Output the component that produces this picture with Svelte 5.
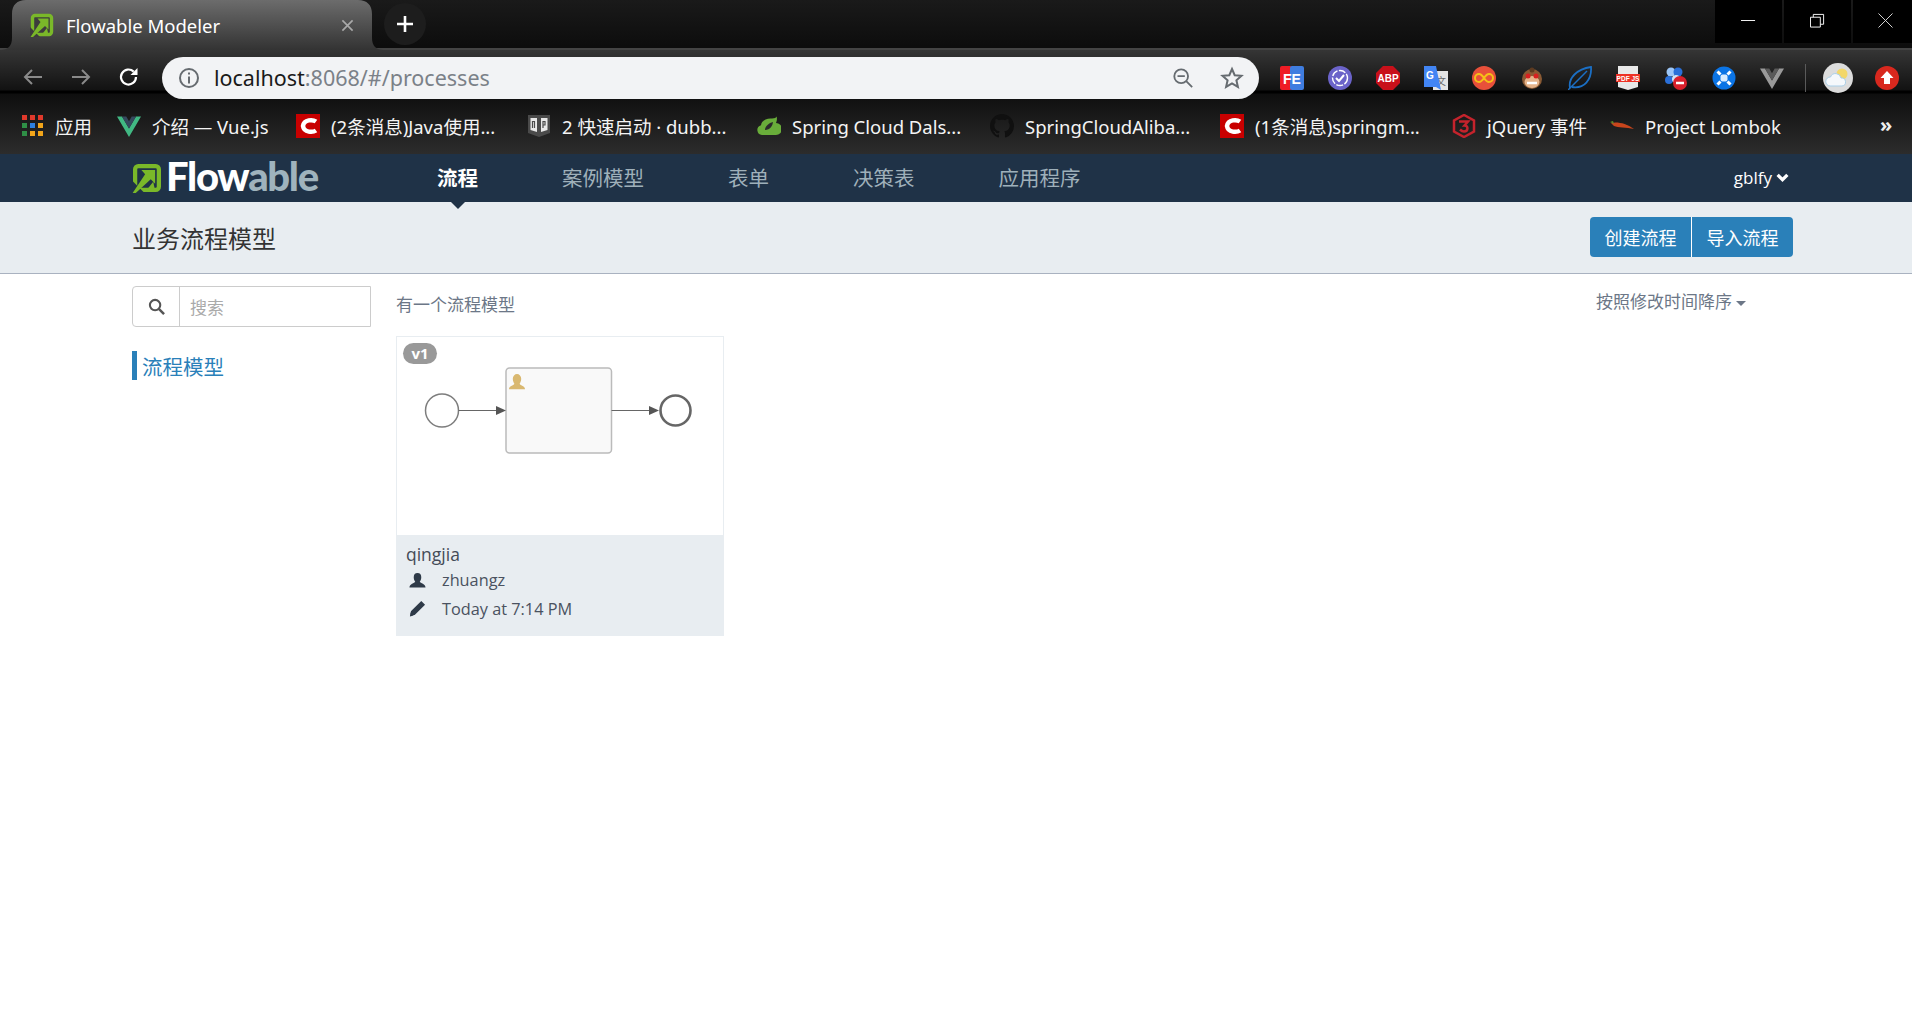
<script>
  const bookmarks = [
    { id: 'apps', label: '应用', w: 95 },
    { id: 'vue', label: '介绍 — Vue.js', w: 179 },
    { id: 'csdn', label: '(2条消息)Java使用...', w: 231 },
    { id: 'book', label: '2 快速启动 · dubb...', w: 230 },
    { id: 'spring', label: 'Spring Cloud Dals...', w: 233 },
    { id: 'github', label: 'SpringCloudAliba...', w: 230 },
    { id: 'csdn', label: '(1条消息)springm...', w: 232 },
    { id: 'jq', label: 'jQuery 事件', w: 158 },
    { id: 'lombok', label: 'Project Lombok', w: 200 }
  ];
  const navItems = [
    { label: '流程', active: true },
    { label: '案例模型' },
    { label: '表单' },
    { label: '决策表' },
    { label: '应用程序' }
  ];
  const exts = ['fe', 'check', 'abp', 'gt', 'inf', 'monkey', 'leaf', 'pdf', 'paw', 'bluex', 'vuegrey'];
</script>

{#snippet flowMark(bg)}
  <svg class="mark" viewBox="0 0 24 24">
    <rect x="2.500" y="2.500" width="19" height="19" rx="2.500" fill={bg} stroke="#7ab829" stroke-width="3.400"/>
    <path d="M0 14l10 10H0z" fill={bg}/>
    <path d="M7.500 5.500H18.500V16.500L15 13 3 24H0.500L10.500 9z" fill="#7ab829"/>
    <path d="M18 20l-5 0 4-5z" fill="#7ab829"/>
  </svg>
{/snippet}

{#snippet vueIcon(outer, inner)}
  <svg class="i24" viewBox="0 0 24 24">
    <path d="M0 2.500h5L12 14.500 19 2.500h5L12 23z" fill={outer}/>
    <path d="M5 2.500h4.300L12 7.200l2.700-4.700H19L12 14.500z" fill={inner}/>
  </svg>
{/snippet}

<div class="page">
  <div class="tabstrip">
    <div class="tab">
      <svg class="tabshape" viewBox="0 0 384 50" preserveAspectRatio="none">
        <defs>
          <linearGradient id="tg" x1="0" y1="0" x2="0" y2="1">
            <stop offset="0" stop-color="#6c6c6c"/><stop offset="1" stop-color="#333"/>
          </linearGradient>
        </defs>
        <path d="M0 50c8 0 12-4 12-12V14C12 5 17 0 26 0h332c9 0 14 5 14 14v24c0 8 4 12 12 12z" fill="url(#tg)"/>
      </svg>
      <span class="fav">{@render flowMark('#3d3d3d')}</span>
      <span class="tabtitle">Flowable Modeler</span>
      <svg class="tabclose" viewBox="0 0 14 14"><path d="M1.500 1.500l11 11M12.500 1.500l-11 11" stroke="#a9a9a9" stroke-width="1.800"/></svg>
    </div>
    <div class="newtab">
      <svg viewBox="0 0 20 20"><path d="M10 2v16M2 10h16" stroke="#fff" stroke-width="2.600"/></svg>
    </div>
    <div class="winctl">
      <div class="wbtn w1"><svg viewBox="0 0 16 16"><path d="M0 8h15" stroke="#fff" stroke-width="1"/></svg></div>
      <div class="wbtn w1"><svg viewBox="0 0 16 16"><path d="M.5 4.500h10.500v10.500H.5zM3.500 4.500V1.500H14.500V12H11" fill="none" stroke="#fff"/></svg></div>
      <div class="wbtn w2"><svg viewBox="0 0 16 16"><path d="M.5.500l15 15M15.500.500l-15 15" stroke="#ddd" stroke-width="1"/></svg></div>
    </div>
  </div>

  <div class="chrome">
    <div class="toolbar">
      <div class="navbtns">
        <svg class="i24" viewBox="0 0 24 24"><path d="M21 12H4M11 5l-7 7 7 7" fill="none" stroke="#8a8a8a" stroke-width="2"/></svg>
        <svg class="i24" viewBox="0 0 24 24"><path d="M3 12h17M13 5l7 7-7 7" fill="none" stroke="#8a8a8a" stroke-width="2"/></svg>
        <svg class="i24" viewBox="0 0 24 24"><path d="M19 12a7.500 7.500 0 1 1-2.300-5.400" fill="none" stroke="#fff" stroke-width="2.200"/><path d="M20.500 3v7h-7z" fill="#fff"/></svg>
      </div>
      <div class="omni">
        <svg class="info" viewBox="0 0 22 22"><circle cx="11" cy="11" r="9" fill="none" stroke="#666b70" stroke-width="2"/><path d="M10 5.500h2v2h-2zM10 9.500h2v7h-2z" fill="#666b70"/></svg>
        <span class="url">localhost<span class="urlrest">:8068/#/processes</span></span>
        <svg class="omnizoom" viewBox="0 0 24 24"><circle cx="10" cy="10" r="7.500" fill="none" stroke="#666b70" stroke-width="2"/><path d="M6 10h8M15.500 15.500L22 22" stroke="#666b70" stroke-width="2"/></svg>
        <svg class="star" viewBox="0 0 24 24"><path d="M12 3l2.700 6.200 6.800.600-5.100 4.500 1.500 6.600L12 17.400l-5.900 3.500 1.500-6.600-5.100-4.500 6.800-.600z" fill="none" stroke="#666b70" stroke-width="2"/></svg>
      </div>
      <div class="exts">
        {#each exts as e}
          <div class="ext">
            {#if e === 'fe'}
              <svg class="i24" viewBox="0 0 24 24"><rect width="12" height="24" fill="#ef1c25" rx="2"/><rect x="10" width="14" height="24" fill="#3f7de0" rx="2"/><text x="12" y="17.500" text-anchor="middle" class="svgt" font-size="14" fill="#fff">FE</text></svg>
            {:else if e === 'check'}
              <svg class="i24" viewBox="0 0 24 24"><circle cx="12" cy="12" r="12" fill="#6b63c9"/><circle cx="12" cy="12" r="7.500" fill="none" stroke="#fff" stroke-width="1.400" stroke-dasharray="7 1.500"/><path d="M8 12l3 3 5-6" fill="none" stroke="#fff" stroke-width="2"/></svg>
            {:else if e === 'abp'}
              <svg class="i24" viewBox="0 0 24 24"><path d="M7 0h10l7 7v10l-7 7H7l-7-7V7z" fill="#c8101a"/><text x="12" y="16" text-anchor="middle" class="svgt" font-size="10" fill="#fff">ABP</text></svg>
            {:else if e === 'gt'}
              <svg class="i24" viewBox="0 0 24 24"><rect x="9" y="5" width="15" height="19" fill="#e4e4e4"/><text x="17" y="19" text-anchor="middle" font-size="10" fill="#666" class="cjk">文</text><path d="M0 0h12l5 24-5-3H0z" fill="#4285f4"/><text x="6" y="13" text-anchor="middle" class="svgt" font-size="10" fill="#fff">G</text></svg>
            {:else if e === 'inf'}
              <svg class="i24" viewBox="0 0 24 24"><circle cx="12" cy="12" r="12" fill="#e8503a"/><path d="M12 12c-2-3-3.500-4-5-4a4 4 0 0 0 0 8c1.500 0 3-1 5-4s3.500-4 5-4a4 4 0 0 1 0 8c-1.500 0-3-1-5-4z" fill="none" stroke="#f5c018" stroke-width="2"/></svg>
            {:else if e === 'monkey'}
              <svg class="i24" viewBox="0 0 24 24"><circle cx="12" cy="13" r="10" fill="#8a5a34"/><circle cx="12" cy="4" r="2.500" fill="#5c3a20"/><ellipse cx="12" cy="16" rx="7.500" ry="6" fill="#e6b48a"/><circle cx="8" cy="10" r="2.500" fill="#d82020"/><circle cx="16" cy="10" r="2.500" fill="#d82020"/><path d="M7 17h10" stroke="#fff" stroke-width="2.500"/></svg>
            {:else if e === 'leaf'}
              <svg class="i24" viewBox="0 0 24 24"><path d="M2 22C0 12 9 3 23 1c1 13-7 22-19 20" fill="none" stroke="#1b6fc4" stroke-width="1.800"/><path d="M0 24L19 5" stroke="#1b6fc4" stroke-width="1.500"/></svg>
            {:else if e === 'pdf'}
              <svg class="i24" viewBox="0 0 24 24"><path d="M2 0h20v21l-10 3-10-3z" fill="#e8e8e8"/><rect y="8" width="24" height="8" fill="#ee3124"/><text x="12" y="14.500" text-anchor="middle" class="svgt" font-size="6.500" fill="#fff">PDF JS</text></svg>
            {:else if e === 'paw'}
              <svg class="i24" viewBox="0 0 24 24"><circle cx="7" cy="6" r="4.500" fill="#9cc6f7"/><circle cx="14" cy="6" r="4.500" fill="#2a6fd8"/><circle cx="5" cy="14" r="4" fill="#2a6fd8"/><circle cx="12" cy="13" r="4" fill="#cfe3fa"/><circle cx="16" cy="17" r="7" fill="#d9202c"/><path d="M12 17h8" stroke="#fff" stroke-width="2.500"/></svg>
            {:else if e === 'bluex'}
              <svg class="i24" viewBox="0 0 24 24"><circle cx="12" cy="12" r="11.500" fill="#0b74e5"/><rect x="8.500" y="8.500" width="7" height="7" rx="2" fill="#d9ecff"/><path d="M5.500 5.500l3 3M18.500 5.500l-3 3M5.500 18.500l3-3M18.500 18.500l-3-3" stroke="#fff" stroke-width="3"/></svg>
            {:else}
              {@render vueIcon('#9a9a9a', '#5a5a5a')}
            {/if}
          </div>
        {/each}
      </div>
      <div class="sep"></div>
      <svg class="weather" viewBox="0 0 30 30"><circle cx="15" cy="15" r="15" fill="#dcdcdc"/><circle cx="19" cy="11" r="5.500" fill="#f3d768"/><path d="M7 23a4.500 4.500 0 0 1 .5-9 5.500 5.500 0 0 1 10.500 1 4 4 0 0 1 1 8z" fill="#f5f8fb" stroke="#a9cfe8"/></svg>
      <svg class="redup" viewBox="0 0 24 24"><circle cx="12" cy="12" r="12" fill="#d8281e"/><path d="M12 5l6.500 7H15v6H9v-6H5.500z" fill="#fff"/></svg>
    </div>

    <div class="bookmarks">
      {#each bookmarks as b}
        <div class="bm" style="width:{b.w}px">
          <span class="bmicon">
            {#if b.id === 'apps'}
              <svg class="i22" viewBox="0 0 22 22">
                <path d="M0 0h5v5H0z" fill="#e0392b"/><path d="M8 0h5v5H8z" fill="#e0392b"/><path d="M16 0h5v5h-5z" fill="#e0392b"/>
                <path d="M0 8h5v5H0z" fill="#2f8f46"/><path d="M8 8h5v5H8z" fill="#2c7fe0"/><path d="M16 8h5v5h-5z" fill="#f2a51a"/>
                <path d="M0 16h5v5H0z" fill="#2f8f46"/><path d="M8 16h5v5H8z" fill="#f2a51a"/><path d="M16 16h5v5h-5z" fill="#f2a51a"/>
              </svg>
            {:else if b.id === 'vue'}
              {@render vueIcon('#41b883', '#35495e')}
            {:else if b.id === 'csdn'}
              <svg class="i24" viewBox="0 0 24 24"><rect width="24" height="24" fill="#c80000"/><path d="M20 7.500C17 5.500 8 5 7 12c1 7 10 6.500 13 4.500" fill="none" stroke="#fff" stroke-width="4.500"/></svg>
            {:else if b.id === 'book'}
              <svg class="i24" viewBox="0 0 24 24"><path d="M1 1h22v18l-11 4-11-4z" fill="#4a4a4a"/><path d="M3.500 4h6.500v14l-6.500-2zM20.500 4H14v14l6.500-2z" fill="#e8e8e8"/><path d="M5.500 14V7.500h2V14M16 14V7.500h2V11h-2" fill="none" stroke="#4a4a4a" stroke-width="1.200"/></svg>
            {:else if b.id === 'spring'}
              <svg class="i24" viewBox="0 0 24 24"><path d="M5 20a5 5 0 0 1-1-9.800C5 5 10 3 15 3.500c3 0 4-1 4.500-2 1 3 0 5-.500 6.500a6 6 0 0 1 0 12z" fill="#69ad3a" transform="translate(0 1)"/><path d="M8 16c0-4 4-7 8-8-.500 4-3 8-8 8z" fill="#2b2b2b"/></svg>
            {:else if b.id === 'github'}
              <svg class="i24" viewBox="0 0 16 16"><path fill="#101010" d="M8 0C3.580 0 0 3.580 0 8c0 3.540 2.290 6.530 5.470 7.590.400.070.550-.170.550-.380 0-.190-.010-.820-.010-1.490-2.010.370-2.530-.490-2.690-.940-.090-.230-.480-.940-.820-1.130-.280-.150-.680-.520-.010-.530.630-.010 1.080.580 1.230.820.720 1.210 1.870.870 2.330.660.070-.520.280-.870.510-1.070-1.780-.200-3.640-.890-3.640-3.950 0-.870.310-1.590.820-2.150-.080-.200-.360-1.020.080-2.120 0 0 .670-.210 2.200.820.640-.180 1.320-.270 2-.270.680 0 1.360.090 2 .270 1.530-1.040 2.200-.820 2.200-.820.440 1.100.160 1.920.080 2.120.510.560.820 1.270.820 2.150 0 3.070-1.870 3.750-3.650 3.950.290.250.540.730.540 1.480 0 1.070-.010 1.930-.010 2.200 0 .210.150.460.550.380A8.013 8.013 0 0 0 16 8c0-4.420-3.580-8-8-8z"/></svg>
            {:else if b.id === 'jq'}
              <svg class="i24" viewBox="0 0 24 24"><path d="M12 1l10 5.500v11L12 23 2 17.500v-11z" fill="none" stroke="#c4232c" stroke-width="2.500"/><path d="M7 7.500h9l-3.500 4c4 0 4 6-.500 6-2 0-3-1-4-2" fill="none" stroke="#c4232c" stroke-width="2.500"/></svg>
            {:else}
              <svg class="i24" viewBox="0 0 24 24"><path d="M1 9c6-1.500 15 0 23 6-8-2-16-1-20-3z" fill="#c8451c"/><path d="M0 8l3-1 1 3z" fill="#5e8b2a"/></svg>
            {/if}
          </span>
          <span class="bmtext">{b.label}</span>
        </div>
      {/each}
      <span class="more">»</span>
    </div>
  </div>

  <header class="appnav">
    <div class="logo">
      {@render flowMark('#1f3247')}
      <span class="logotext">Flow<span class="able">able</span></span>
    </div>
    <nav class="menu">
      {#each navItems as n}
        <span class="menuitem" class:active={n.active}>{n.label}</span>
      {/each}
    </nav>
    <div class="user">gblfy
      <svg class="chev" viewBox="0 0 12 8"><path d="M1.500 1.500L6 6l4.500-4.500" fill="none" stroke="#fff" stroke-width="3"/></svg>
    </div>
  </header>

  <div class="subheader">
    <h1>业务流程模型</h1>
    <div class="btngroup">
      <button class="b1">创建流程</button>
      <button class="b2">导入流程</button>
    </div>
  </div>

  <main class="content">
    <aside class="side">
      <div class="search">
        <span class="searchicon">
          <svg viewBox="0 0 18 18"><circle cx="7.500" cy="7.500" r="5.500" fill="none" stroke="#555" stroke-width="2.200"/><path d="M11.500 11.500L17 17" stroke="#555" stroke-width="2.600"/></svg>
        </span>
        <span class="placeholder">搜索</span>
      </div>
      <div class="sideitem">流程模型</div>
    </aside>
    <section class="list">
      <div class="listhead">
        <span class="count">有一个流程模型</span>
        <span class="sort">按照修改时间降序<i class="caret"></i></span>
      </div>
      <article class="card">
        <div class="thumb">
          <span class="badge">v1</span>
          <svg class="diagram" viewBox="0 0 328 199" width="328" height="199">
            <circle cx="46" cy="74.500" r="16.500" fill="#fff" stroke="#7d7d7d" stroke-width="1.500"/>
            <path d="M62.500 74.500H105" stroke="#666" stroke-width="1.200"/>
            <rect x="110" y="32" width="105.500" height="85" rx="3.500" fill="#f9f9f9" stroke="#bbb" stroke-width="1.500"/>
            <path d="M100 70l10 4.500-10 4.500z" fill="#555"/>
            <path d="M215.500 74.500H258" stroke="#666" stroke-width="1.200"/>
            <path d="M253 70l10 4.500-10 4.500z" fill="#555"/>
            <circle cx="279.500" cy="74.500" r="15" fill="#fff" stroke="#666" stroke-width="2.600"/>
            <path d="M121 38a4.200 4.800 0 0 1 4.200 4.800c0 2.500-1 4-1.600 5 1 2 5.400 2 5.400 5.500H113c0-3.500 4.400-3.500 5.400-5.500-.6-1-1.600-2.500-1.600-5A4.200 4.800 0 0 1 121 38z" fill="#d9b870"/>
          </svg>
        </div>
        <div class="foot">
          <div class="name">qingjia</div>
          <div class="meta">
            <svg class="metaicon" viewBox="0 0 18 18"><path d="M9 1a4 4.500 0 0 1 4 4.500c0 2.200-.9 3.700-1.600 4.700.8 1.900 6.100 2 6.100 6.300H.5c0-4.300 5.300-4.400 6.100-6.300C5.900 9.200 5 7.700 5 5.500A4 4.500 0 0 1 9 1z" fill="#2e3a48"/></svg>
            <span>zhuangz</span>
          </div>
          <div class="meta">
            <svg class="metaicon" viewBox="0 0 18 18"><path d="M13 1l4 4L6 16H2v-4zM1.500 13l3.500 3.500-4 1z" fill="#2e3a48"/></svg>
            <span>Today at 7:14 PM</span>
          </div>
        </div>
      </article>
    </section>
  </main>
</div>

<style>
  :global(body) { margin: 0; background: #fff; }
  .page { width: 1912px; height: 1013px; overflow: hidden; font-family: "Open Sans", "Noto Sans CJK SC", sans-serif; }
  svg { display: block; flex: none; }
  .i24 { width: 24px; height: 24px; }
  .i22 { width: 22px; height: 22px; }

  .tabstrip { height: 50px; display: flex; align-items: flex-start; background: linear-gradient(#1a1a1a, #0c0c0c); box-shadow: inset 0 -2px #444; }
  .tab { position: relative; width: 384px; height: 50px; display: flex; align-items: center; padding-left: 30px; box-sizing: border-box; }
  .tabshape { position: absolute; inset: 0; width: 100%; height: 100%; }
  .fav { position: relative; width: 24px; height: 24px; }
  .mark { width: 100%; height: 100%; }
  .tabtitle { position: relative; margin-left: 12px; color: #fff; font: 18.500px "Noto Sans", "Noto Sans CJK SC", sans-serif; }
  .tabclose { position: absolute; left: 341px; top: 19px; width: 13px; height: 13px; }
  .newtab { width: 42px; height: 42px; margin-top: 3px; border-radius: 50%; background: #1d1d1d; display: flex; align-items: center; justify-content: center; }
  .newtab svg { width: 20px; height: 20px; }
  .winctl { margin-left: auto; display: flex; gap: 2px; height: 43px; }
  .wbtn { height: 43px; background: #000; display: flex; align-items: center; justify-content: center; }
  .w1 { width: 67px; }
  .w2 { width: 59px; padding-left: 6px; box-sizing: border-box; }
  .wbtn svg { width: 15px; height: 15px; margin-top: -2px; }

  .chrome { height: 104px; background: linear-gradient(#353535 0, #121212 40px, #000 41px, #000 43px, #0e0e0e 44px, #2c2c2c 104px); }
  .toolbar { height: 54px; display: flex; align-items: flex-start; }
  .navbtns { width: 162px; display: flex; gap: 24px; padding: 15px 0 0 21px; box-sizing: border-box; }
  .omni { margin-top: 7px; width: 1097px; height: 42px; border-radius: 21px; background: #f2f3f5; display: flex; align-items: center; padding: 0 15px 0 16px; box-sizing: border-box; }
  .info { width: 22px; height: 22px; }
  .url { margin-left: 14px; font: 21.500px/32px "Noto Sans", "Noto Sans CJK SC", sans-serif; color: #1a1a1a; }
  .urlrest { color: #7b8188; }
  .omnizoom { width: 22px; height: 22px; margin-left: auto; }
  .star { width: 24px; height: 24px; margin-left: 26px; }
  .exts { display: flex; margin: 16px 0 0 9px; }
  .ext { width: 48px; height: 24px; display: flex; justify-content: center; }
  .svgt { font-family: "Liberation Sans", sans-serif; font-weight: 700; }
  .cjk { font-family: "Noto Sans CJK SC", sans-serif; }
  .sep { width: 1px; height: 28px; margin: 14px 0 0 9px; background: #5a5a5a; }
  .weather { width: 30px; height: 30px; margin: 13px 0 0 17px; }
  .redup { width: 24px; height: 24px; margin: 16px 0 0 22px; }

  .bookmarks { height: 44px; display: flex; align-items: center; padding-left: 22px; position: relative; }
  .bm { display: flex; align-items: center; gap: 11px; color: #f4f4f4; font: 18.500px "Noto Sans", "Noto Sans CJK SC", sans-serif; white-space: nowrap; flex: none; }
  .bmicon { display: flex; }
  .more { margin-left: 70px; color: #eee; font: bold 20px "Noto Sans", sans-serif; margin-top: -4px; }

  .appnav { height: 48px; background: #1f3247; display: flex; align-items: center; padding-left: 132px; box-sizing: border-box; }
  .logo { width: 305px; display: flex; align-items: center; gap: 4px; }
  .logo .mark { width: 30px; height: 30px; }
  .logotext { color: #fff; font: 900 40px/44px Lato, sans-serif; letter-spacing: -1.300px; margin-top: -4px; }
  .able { color: #9fb3bd; }
  .menu { display: flex; gap: 84px; }
  .menuitem { color: #9fb0ba; font-size: 20.500px; position: relative; line-height: 48px; }
  .active { color: #fff; font-weight: 700; }
  .active::after { content: ""; position: absolute; left: 50%; top: 48px; margin-left: -7px; border: 7px solid transparent; border-top-color: #1f3247; border-bottom: 0; z-index: 1; }
  .user { margin-left: auto; margin-right: 123px; display: flex; align-items: center; gap: 4px; color: #fff; font-size: 17px; margin-top: -2px; }
  .chev { width: 13px; height: 9px; }

  .subheader { height: 72px; background: #e8edf1; border-bottom: 1px solid #a9b2c0; box-sizing: border-box; display: flex; align-items: center; justify-content: space-between; padding: 0 119px 0 132px; }
  h1 { margin: 0; font-size: 24px; font-weight: 400; color: #333; }
  .btngroup { display: flex; margin-top: -1px; }
  button { height: 40px; border: 0; background: #2a80b9; color: #fff; font: 18px "Open Sans", "Noto Sans CJK SC", sans-serif; padding: 0; }
  .b1 { width: 102px; border-radius: 4px 0 0 4px; border-right: 1px solid #fff; }
  .b2 { width: 101px; border-radius: 0 4px 4px 0; }

  .content { display: flex; padding: 12px 0 0 132px; }
  .side { width: 264px; flex: none; }
  .search { width: 239px; height: 41px; border: 1px solid #ccc; box-sizing: border-box; border-radius: 4px 0 0 4px; display: flex; align-items: center; }
  .searchicon { width: 46px; height: 100%; border-right: 1px solid #ccc; display: flex; align-items: center; justify-content: center; }
  .searchicon svg { width: 17px; height: 17px; }
  .placeholder { margin-left: 10px; color: #aaa; font-size: 17px; }
  .sideitem { margin-top: 24px; height: 29px; border-left: 5px solid #2a80b9; padding-left: 5px; color: #2a80b9; font-size: 20.500px; line-height: 33px; }
  .list { flex: 1; }
  .listhead { height: 50px; display: flex; justify-content: space-between; align-items: flex-start; padding-right: 166px; color: #6c7787; font-size: 17px; line-height: 38px; }
  .sort { display: flex; align-items: center; margin-top: -3px; }
  .caret { width: 0; height: 0; margin: 2px 0 0 4px; border: 5px solid transparent; border-top-color: #6c7787; border-bottom: 0; }
  .card { width: 328px; height: 300px; box-sizing: border-box; display: flex; flex-direction: column; }
  .thumb { position: relative; height: 199px; border: 1px solid #e8edf1; border-bottom: 0; box-sizing: border-box; }
  .diagram { margin: -1px; }
  .badge { position: absolute; left: 6px; top: 6px; width: 34px; height: 21px; border-radius: 11px; background: #999; color: #fff; font: 700 15px/21px "Open Sans", sans-serif; text-align: center; }
  .foot { flex: 1; background: #e8edf1; padding: 7px 10px; color: #4a5260; }
  .name { font-size: 17.500px; line-height: 24px; color: #444b57; }
  .meta { display: flex; align-items: center; height: 28.500px; margin-left: 3px; font-size: 16.300px; }
  .metaicon { width: 17px; height: 17px; margin-right: 16px; }
</style>
